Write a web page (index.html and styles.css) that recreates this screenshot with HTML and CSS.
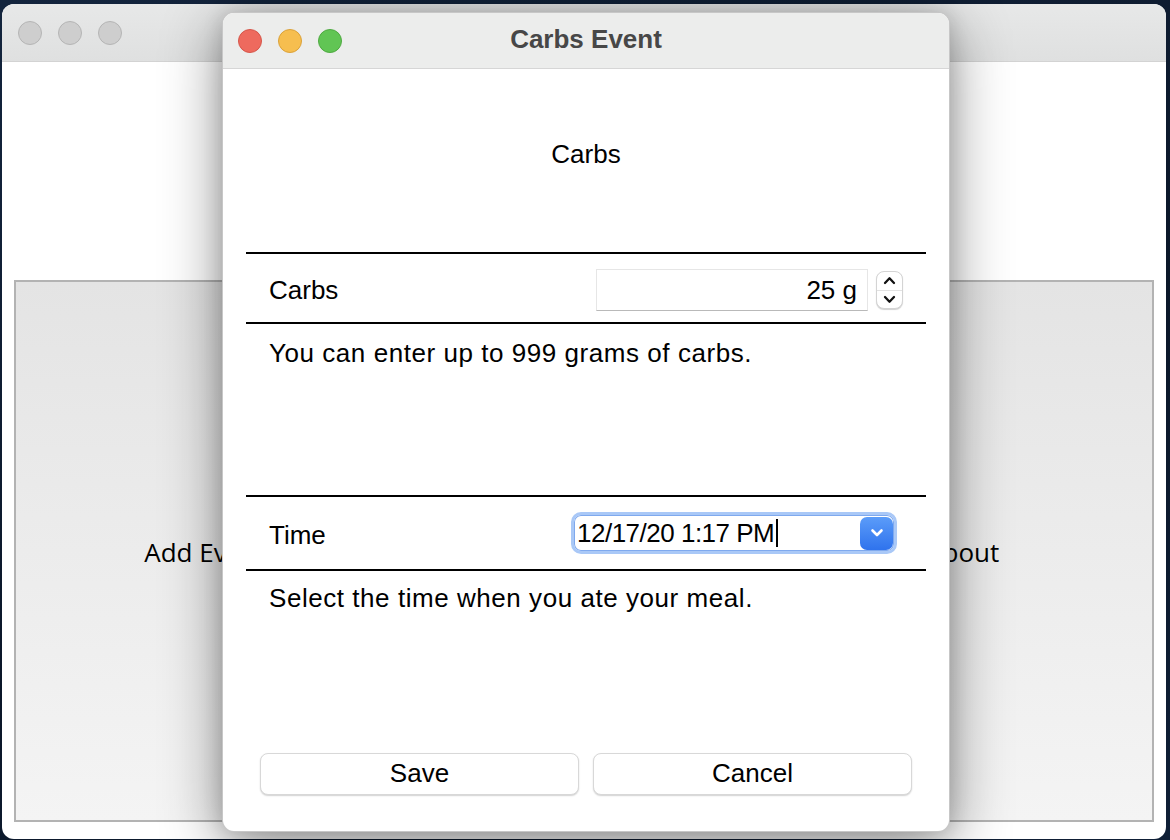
FILE: index.html
```html
<!DOCTYPE html>
<html lang="en">
<head>
<meta charset="utf-8">
<title>Carbs Event</title>
<link rel="stylesheet" href="styles.css">
</head>
<body>
<div class="desktop">
  <div class="window back-window">
    <div class="titlebar back-titlebar">
      <div class="lights">
        <span class="light light-gray"></span>
        <span class="light light-gray"></span>
        <span class="light light-gray"></span>
      </div>
    </div>
    <div class="back-content">
      <div class="groupbox">
        <div class="flat-btn">Add Event</div>
        <div class="flat-btn"></div>
        <div class="flat-btn">About</div>
      </div>
    </div>
  </div>

  <div class="window dialog">
    <div class="titlebar dlg-titlebar">
      <div class="lights">
        <span class="light light-red"></span>
        <span class="light light-yellow"></span>
        <span class="light light-green"></span>
      </div>
      <div class="dlg-title">Carbs Event</div>
      <div class="spacer"></div>
    </div>
    <div class="dlg-body">
      <div class="heading">Carbs</div>
      <div class="row row-carbs">
        <span class="label">Carbs</span>
        <div class="spin">
          <div class="spin-field">25 g</div>
          <div class="stepper">
            <div class="step step-up">
              <svg width="13" height="9" viewBox="0 0 13 9"><path d="M2 7 L6.5 2.3 L11 7" fill="none" stroke="#111" stroke-width="2.3" stroke-linecap="round" stroke-linejoin="round"/></svg>
            </div>
            <div class="step step-down">
              <svg width="13" height="9" viewBox="0 0 13 9"><path d="M2 2 L6.5 6.7 L11 2" fill="none" stroke="#111" stroke-width="2.3" stroke-linecap="round" stroke-linejoin="round"/></svg>
            </div>
          </div>
        </div>
      </div>
      <div class="desc desc-carbs">You can enter up to 999 grams of carbs.</div>
      <div class="row row-time">
        <span class="label label-time">Time</span>
        <div class="date-edit">
          <span class="date-text">12/17/20 1:17 PM</span><span class="caret"></span>
          <div class="date-btn">
            <svg width="16" height="10" viewBox="0 0 16 10"><path d="M3.5 2.5 L8 7 L12.5 2.5" fill="none" stroke="#ffffff" stroke-width="2.6" stroke-linecap="round" stroke-linejoin="round"/></svg>
          </div>
        </div>
      </div>
      <div class="desc desc-time">Select the time when you ate your meal.</div>
      <div class="actions">
        <button class="push-btn" type="button">Save</button>
        <button class="push-btn" type="button">Cancel</button>
      </div>
    </div>
  </div>
</div>
</body>
</html>
```

FILE: styles.css
```css
html, body {
  margin: 0;
  padding: 0;
}

body {
  width: 1170px;
  height: 840px;
  overflow: hidden;
  background: #0c1a2e;
  font-family: "Liberation Sans", Arial, sans-serif;
  color: #000;
}

.desktop {
  position: relative;
  width: 1170px;
  height: 840px;
  background: linear-gradient(160deg, #13243d 0%, #0b1729 55%, #0f1f36 100%);
}

.window {
  position: absolute;
  box-sizing: border-box;
  background: #fff;
  overflow: hidden;
  display: flex;
  flex-direction: column;
}

/* ---------- background window ---------- */
.back-window {
  left: 2px;
  top: 4px;
  width: 1164px;
  height: 835px;
  border-radius: 12px;
}

.titlebar {
  flex: none;
  box-sizing: border-box;
}

.back-titlebar {
  height: 58px;
  background: linear-gradient(#e7e8e8, #dfe0e0);
  border-bottom: 1px solid #d3d3d3;
  display: flex;
  align-items: center;
  padding-left: 16px;
}

.lights {
  display: flex;
  gap: 16px;
}

.light {
  display: block;
  width: 24px;
  height: 24px;
  border-radius: 50%;
  box-sizing: border-box;
  border: 1px solid transparent;
}

.light-gray { background: #cecece; border-color: #b5b5b5; }
.light-red { background: #ee6a5e; border-color: #d5564a; }
.light-yellow { background: #f6be4f; border-color: #dba23a; }
.light-green { background: #61c554; border-color: #4faa41; }

.back-content {
  flex: 1;
  box-sizing: border-box;
  padding: 218px 12px 17px;
  display: flex;
}

.groupbox {
  flex: 1;
  box-sizing: border-box;
  border: 2px solid #b3b3b3;
  background: linear-gradient(#e4e4e4, #f4f4f4);
  display: grid;
  grid-template-columns: repeat(3, 1fr);
  align-items: center;
}

.flat-btn {
  text-align: center;
  font-family: "Open Sans", "Liberation Sans", sans-serif;
  font-size: 26px;
  color: #000;
  padding-top: 2px;
}

/* ---------- dialog ---------- */
.dialog {
  left: 222px;
  top: 12px;
  width: 728px;
  height: 820px;
  border-radius: 12px;
  border: 1px solid rgba(0, 0, 0, 0.22);
  box-shadow: 0 14px 60px rgba(0, 0, 0, 0.45), 0 0 20px rgba(0, 0, 0, 0.14);
}

.dlg-titlebar {
  height: 56px;
  background: #ecedec;
  border-bottom: 1px solid #d6d6d6;
  display: grid;
  grid-template-columns: 1fr auto 1fr;
  align-items: center;
  padding-left: 15px;
  padding-right: 15px;
}

.dlg-title {
  font-size: 26px;
  font-weight: bold;
  color: #474747;
  line-height: 30px;
  margin-top: -3px;
}

.dlg-body {
  flex: 1;
  display: flex;
  flex-direction: column;
  padding: 0 23px;
  font-size: 26px;
  line-height: 30px;
}

.heading {
  height: 183px;
  box-sizing: border-box;
  padding-top: 70px;
  text-align: center;
  flex: none;
}

.row {
  flex: none;
  box-sizing: border-box;
  display: flex;
  align-items: center;
  justify-content: space-between;
  border-top: 2px solid #000;
  border-bottom: 2px solid #000;
  padding-left: 23px;
}

.row-carbs {
  height: 72px;
  padding-top: 4px;
  padding-right: 23px;
}

.row-time {
  height: 76px;
  padding-right: 29px;
}

.label {
  display: block;
}

.label-time {
  margin-top: 3px;
}

.spin {
  display: flex;
  align-items: center;
  gap: 8px;
}

.spin-field {
  width: 272px;
  height: 42px;
  box-sizing: border-box;
  border: 1px solid #e6e6e6;
  border-bottom-color: #b9b9b9;
  background: #fff;
  text-align: right;
  padding-right: 10px;
  line-height: 40px;
}

.stepper {
  width: 27px;
  height: 38px;
  box-sizing: border-box;
  border: 1px solid #d4d4d4;
  border-radius: 8px;
  background: #fff;
  box-shadow: 0 1px 1px rgba(0, 0, 0, 0.18);
  display: flex;
  flex-direction: column;
}

.step {
  flex: 1;
  display: flex;
  align-items: center;
  justify-content: center;
}

.step-up {
  border-bottom: 1px solid #e2e2e2;
}

.step svg {
  display: block;
}

.date-edit {
  width: 326px;
  height: 42px;
  box-sizing: border-box;
  border: 3px solid #a9c8f7;
  border-radius: 10px;
  background: #fff;
  box-shadow: inset 0 0 0 1px #7fa9ee;
  display: flex;
  align-items: center;
  padding-left: 3px;
  padding-right: 1px;
}

.date-text {
  display: block;
  white-space: nowrap;
  letter-spacing: -0.5px;
}

.caret {
  display: block;
  width: 2px;
  height: 28px;
  background: #000;
  margin-left: 2px;
}

.date-btn {
  margin-left: auto;
  width: 33px;
  height: 33px;
  border-radius: 7px;
  background: linear-gradient(#5b9cf9, #2f73ed);
  display: flex;
  align-items: center;
  justify-content: center;
}

.date-btn svg {
  display: block;
}

.desc {
  flex: none;
  box-sizing: border-box;
  padding-left: 23px;
  letter-spacing: 0.55px;
}

.desc-carbs {
  height: 171px;
  padding-top: 14px;
}

.desc-time {
  flex: 1;
  padding-top: 12px;
}

.actions {
  flex: none;
  display: flex;
  gap: 14px;
  padding: 0 14px 36px;
}

.push-btn {
  flex: 1;
  height: 42px;
  box-sizing: border-box;
  border: 1px solid #d8d8d8;
  border-radius: 8px;
  background: #fff;
  box-shadow: 0 1px 1.5px rgba(0, 0, 0, 0.18);
  font-family: "Liberation Sans", Arial, sans-serif;
  font-size: 26px;
  line-height: 30px;
  color: #000;
  padding: 0 0 2px;
}
```
